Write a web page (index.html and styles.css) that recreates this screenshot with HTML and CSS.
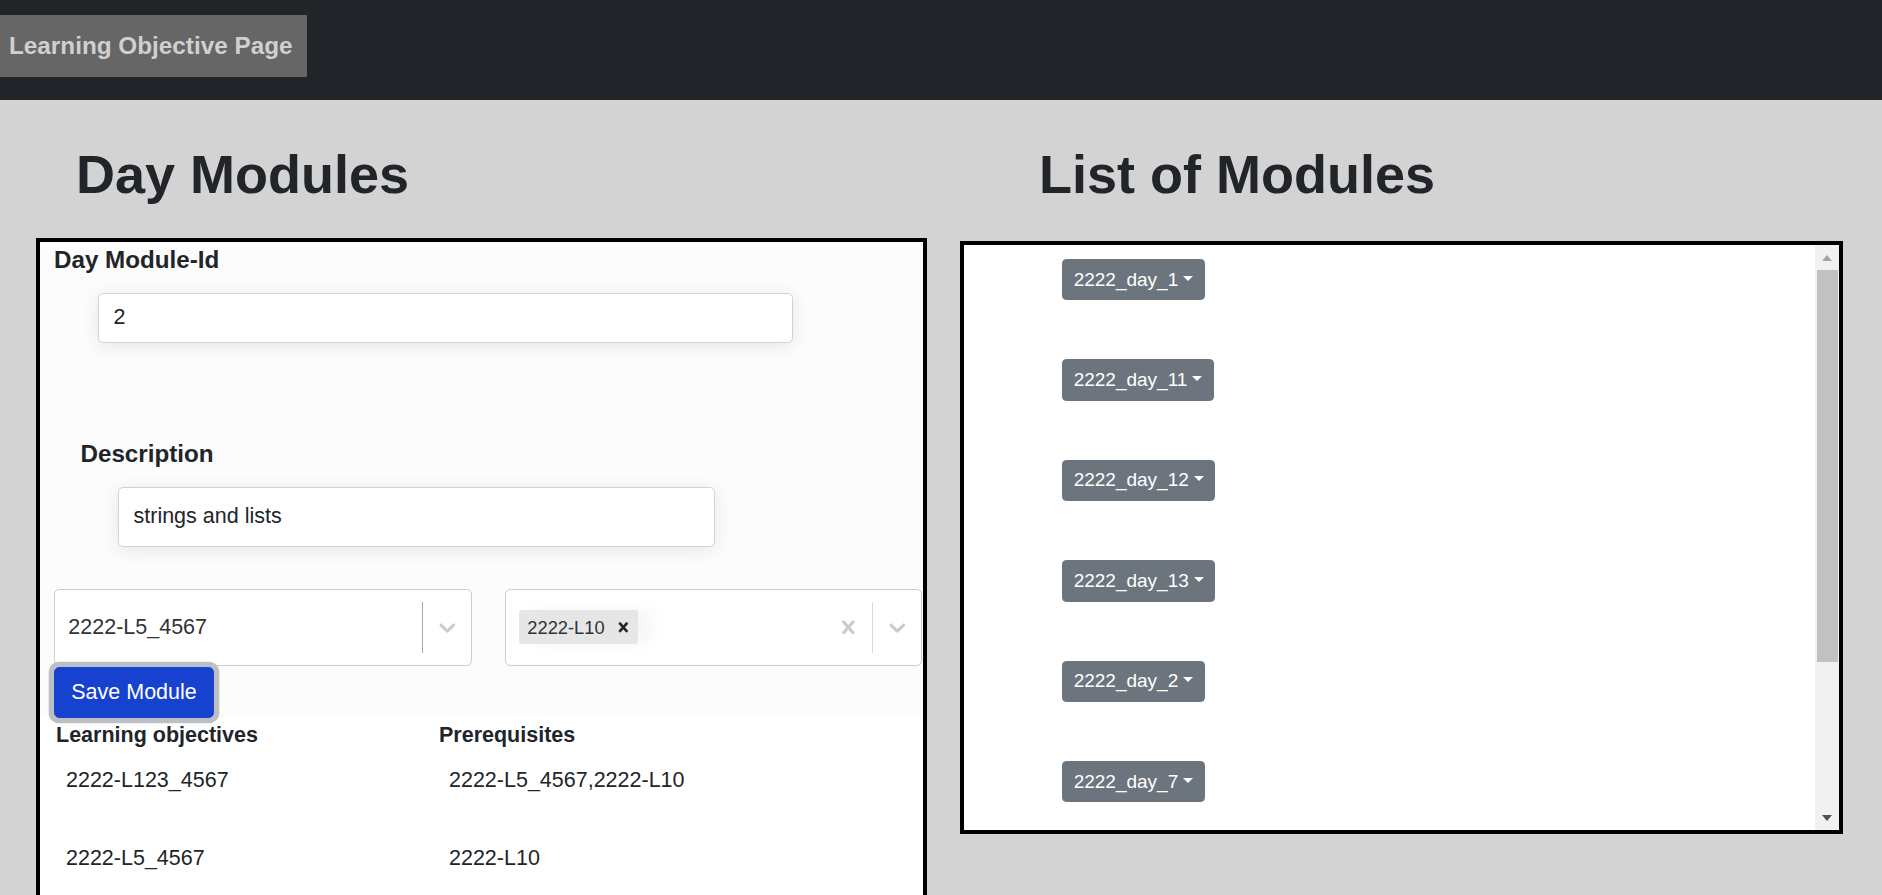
FILE: index.html
```html
<!DOCTYPE html>
<html lang="en">
<head>
<meta charset="utf-8">
<title>Learning Objective Page</title>
<link rel="stylesheet" href="styles.css">
</head>
<body>
<nav class="topbar">
  <div class="brand">Learning Objective Page</div>
</nav>
<main class="page">
  <section class="col">
    <h1 class="col-title title-left">Day Modules</h1>
    <div class="panel panel-left">
      <form class="module-form">
        <label class="form-label" for="mid">Day Module-Id</label>
        <input class="field field-id" id="mid" type="text" value="2">
        <label class="form-label label-desc" for="desc">Description</label>
        <input class="field field-desc" id="desc" type="text" value="strings and lists">
        <div class="select-row">
          <div class="select">
            <div class="select-value"><span class="select-single">2222-L5_4567</span></div>
            <div class="select-indicators">
              <span class="select-sep sep-dark"></span>
              <span class="select-ind"><svg viewBox="0 0 20 20"><path d="M4.516 7.548c0.436-0.446 1.043-0.481 1.576 0l3.908 3.747 3.908-3.747c0.533-0.481 1.141-0.446 1.574 0 0.436 0.445 0.408 1.197 0 1.615-0.406 0.418-4.695 4.502-4.695 4.502-0.217 0.223-0.502 0.335-0.787 0.335s-0.57-0.112-0.789-0.335c0 0-4.287-4.084-4.695-4.502s-0.436-1.17 0-1.615z"/></svg></span>
            </div>
          </div>
          <div class="select">
            <div class="select-value">
              <span class="tag"><span class="tag-label">2222-L10</span><span class="tag-remove"><svg viewBox="0 0 20 20"><path d="M14.348 14.849c-0.469 0.469-1.229 0.469-1.697 0l-2.651-3.030-2.651 3.029c-0.469 0.469-1.229 0.469-1.697 0-0.469-0.469-0.469-1.229 0-1.697l2.758-3.15-2.759-3.152c-0.469-0.469-0.469-1.228 0-1.697s1.228-0.469 1.697 0l2.652 3.031 2.651-3.031c0.469-0.469 1.228-0.469 1.697 0s0.469 1.229 0 1.697l-2.758 3.152 2.758 3.15c0.469 0.469 0.469 1.229 0 1.698z"/></svg></span></span>
            </div>
            <div class="select-indicators">
              <span class="select-ind"><svg viewBox="0 0 20 20"><path d="M14.348 14.849c-0.469 0.469-1.229 0.469-1.697 0l-2.651-3.030-2.651 3.029c-0.469 0.469-1.229 0.469-1.697 0-0.469-0.469-0.469-1.229 0-1.697l2.758-3.15-2.759-3.152c-0.469-0.469-0.469-1.228 0-1.697s1.228-0.469 1.697 0l2.652 3.031 2.651-3.031c0.469-0.469 1.228-0.469 1.697 0s0.469 1.229 0 1.697l-2.758 3.152 2.758 3.15c0.469 0.469 0.469 1.229 0 1.698z"/></svg></span>
              <span class="select-sep"></span>
              <span class="select-ind"><svg viewBox="0 0 20 20"><path d="M4.516 7.548c0.436-0.446 1.043-0.481 1.576 0l3.908 3.747 3.908-3.747c0.533-0.481 1.141-0.446 1.574 0 0.436 0.445 0.408 1.197 0 1.615-0.406 0.418-4.695 4.502-4.695 4.502-0.217 0.223-0.502 0.335-0.787 0.335s-0.57-0.112-0.789-0.335c0 0-4.287-4.084-4.695-4.502s-0.436-1.17 0-1.615z"/></svg></span>
            </div>
          </div>
        </div>
        <button class="btn-save" type="button">Save Module</button>
      </form>
      <div class="lo-table">
        <div class="lo-th">Learning objectives</div>
        <div class="lo-th">Prerequisites</div>
        <div class="lo-td">2222-L123_4567</div>
        <div class="lo-td">2222-L5_4567,2222-L10</div>
        <div class="lo-td">2222-L5_4567</div>
        <div class="lo-td">2222-L10</div>
      </div>
    </div>
  </section>
  <section class="col">
    <h1 class="col-title title-right">List of Modules</h1>
    <div class="panel panel-right">
      <div class="module-list">
        <div class="module-item"><button class="btn-module" type="button">2222_day_1<span class="caret"></span></button></div>
        <div class="module-item"><button class="btn-module" type="button">2222_day_11<span class="caret"></span></button></div>
        <div class="module-item"><button class="btn-module" type="button">2222_day_12<span class="caret"></span></button></div>
        <div class="module-item"><button class="btn-module" type="button">2222_day_13<span class="caret"></span></button></div>
        <div class="module-item"><button class="btn-module" type="button">2222_day_2<span class="caret"></span></button></div>
        <div class="module-item"><button class="btn-module" type="button">2222_day_7<span class="caret"></span></button></div>
      </div>
      <div class="scrollbar">
        <div class="sb-btn sb-up"><span class="arrow-up"></span></div>
        <div class="sb-track"><div class="sb-thumb"></div></div>
        <div class="sb-btn sb-down"><span class="arrow-down"></span></div>
      </div>
    </div>
  </section>
</main>
</body>
</html>
```
FILE: styles.css
```css
* { box-sizing: border-box; }

html, body {
  margin: 0;
  padding: 0;
}

body {
  background: #d4d3d4;
  color: #212529;
  font-family: "Liberation Sans", Arial, sans-serif;
  font-size: 21.5px;
  line-height: 1.5;
}

/* ---------- top bar ---------- */
.topbar {
  height: 100px;
  background: #212529;
  padding-top: 15px;
}

.brand {
  width: 307px;
  padding: 13px 0 13px 9px;
  background: #666666;
  color: #d0d0d0;
  font-size: 24.3px;
  font-weight: bold;
  line-height: 36px;
  white-space: nowrap;
}

/* ---------- page ---------- */
.page {
  display: grid;
  grid-template-columns: 1fr 1fr;
  height: calc(100vh - 100px);
  overflow: hidden;
}

.col {
  display: flex;
  flex-direction: column;
  min-width: 0;
}

.col-title {
  margin: 41.5px 0 0 0;
  font-size: 54px;
  font-weight: bold;
  line-height: 64px;
  color: #212529;
}

.title-left { margin-left: 76px; }
.title-right { margin-left: 98px; }

.panel {
  border: 4px solid #000;
  background: #fff;
}

.panel-left {
  margin: 32.5px 0 0 36px;
  width: 891px;
  flex: none;
}

.panel-right {
  margin: 35.5px 0 0 19px;
  width: 883px;
  height: 593px;
  display: flex;
  flex: none;
}

/* ---------- form card ---------- */
.module-form {
  background: #fcfcfc;
  padding: 4px 0 0 14px;
  display: flex;
  flex-direction: column;
  align-items: flex-start;
}

.form-label {
  font-size: 24.2px;
  font-weight: bold;
  line-height: 28.8px;
}

.label-desc {
  margin: 97px 0 0 26.5px;
}

.field {
  display: block;
  margin-top: 18.2px;
  padding: 0 14.5px;
  border: 1.33px solid #d2d2d2;
  border-radius: 5.33px;
  background: #fff;
  box-shadow: 0 3px 18px rgba(0, 0, 0, 0.09);
  color: #212529;
  font-family: "Liberation Sans", Arial, sans-serif;
  font-size: 21.5px;
  outline: none;
}

.field-id {
  margin-left: 44px;
  width: 695px;
  height: 50px;
}

.field-desc {
  margin-left: 64px;
  width: 597px;
  height: 60px;
}

/* ---------- selects ---------- */
.select-row {
  margin-top: 42px;
  display: flex;
  gap: 33px;
}

.select {
  display: flex;
  align-items: center;
  width: 418px;
  height: 77px;
  border: 1px solid #cccccc;
  border-radius: 5.33px;
  background: #fff;
}

.select + .select { width: 417px; }

.select-value {
  flex: 1;
  display: flex;
  align-items: center;
  padding: 2.67px 10.67px;
  min-width: 0;
}

.select-single {
  margin: 0 2.67px;
  color: #333;
  font-size: 21.5px;
}

.select-indicators {
  display: flex;
  align-items: center;
  align-self: stretch;
}

.select-sep {
  width: 1px;
  align-self: stretch;
  margin: 12px 0;
  background: #d9d9d9;
}

.sep-dark { background: #a8a8a8; }

.select-ind {
  display: flex;
  padding: 10.67px;
  color: #cccccc;
}

.select-ind svg {
  width: 26.67px;
  height: 26.67px;
  fill: currentColor;
}

.tag {
  display: flex;
  align-items: center;
  height: 34px;
  margin: 2.67px;
  border-radius: 2.67px;
  background: #e6e6e6;
  box-shadow: 14px 0 18px rgba(0, 0, 0, 0.04);
}

.tag-label {
  padding: 0 4px 0 8px;
  color: #333;
  font-size: 18.3px;
}

.tag-remove {
  display: flex;
  padding: 0 5.33px;
  color: #222;
}

.tag-remove svg {
  width: 18.67px;
  height: 18.67px;
  fill: currentColor;
  stroke: currentColor;
  stroke-width: 0.6;
}

/* ---------- save button ---------- */
.btn-save {
  margin-top: 1px;
  width: 160px;
  height: 50.67px;
  padding: 0;
  border: 1.33px solid #1741cf;
  border-radius: 5.33px;
  background: #1741cf;
  color: #fff;
  font-family: "Liberation Sans", Arial, sans-serif;
  font-size: 21.5px;
  line-height: 32px;
  box-shadow: 0 0 0 5.33px #bcbfc3;
}

/* ---------- learning objectives table ---------- */
.lo-table {
  display: grid;
  grid-template-columns: 383px 1fr;
  margin-left: 14px;
}

.lo-th {
  padding-left: 2px;
  font-weight: bold;
  line-height: 35.8px;
}

.lo-td {
  height: 78px;
  padding: 11px 0 0 12px;
  line-height: 32px;
}

/* ---------- module list ---------- */
.module-list {
  flex: 1;
  overflow: hidden;
  padding: 14px 0 0 98px;
  display: flex;
  flex-direction: column;
  align-items: flex-start;
  gap: 59.07px;
}

.module-item { flex: none; }

.btn-module {
  display: inline-flex;
  align-items: center;
  height: 41.33px;
  padding: 0 10.67px;
  border: 1.33px solid #6c757d;
  border-radius: 4.27px;
  background: #6c757d;
  color: #fff;
  font-family: "Liberation Sans", Arial, sans-serif;
  font-size: 19px;
  line-height: 28px;
  white-space: nowrap;
}

.caret {
  display: inline-block;
  margin-left: 4.8px;
  margin-top: -3px;
  border-top: 5.7px solid #fff;
  border-left: 5.7px solid transparent;
  border-right: 5.7px solid transparent;
}

/* ---------- fake scrollbar ---------- */
.scrollbar {
  width: 24px;
  flex: none;
  display: flex;
  flex-direction: column;
  background: #f1f1f1;
}

.sb-btn {
  flex: none;
  display: flex;
  align-items: center;
  justify-content: center;
}

.sb-up { height: 25px; }
.sb-down { height: 24px; }

.sb-track {
  flex: 1;
}

.sb-thumb {
  height: 392px;
  margin: 0 1px 0 2px;
  background: #c1c1c1;
}

.arrow-up {
  border-left: 5.5px solid transparent;
  border-right: 5.5px solid transparent;
  border-bottom: 6px solid #a3a3a3;
}

.arrow-down {
  border-left: 5.5px solid transparent;
  border-right: 5.5px solid transparent;
  border-top: 6px solid #505050;
}
```
